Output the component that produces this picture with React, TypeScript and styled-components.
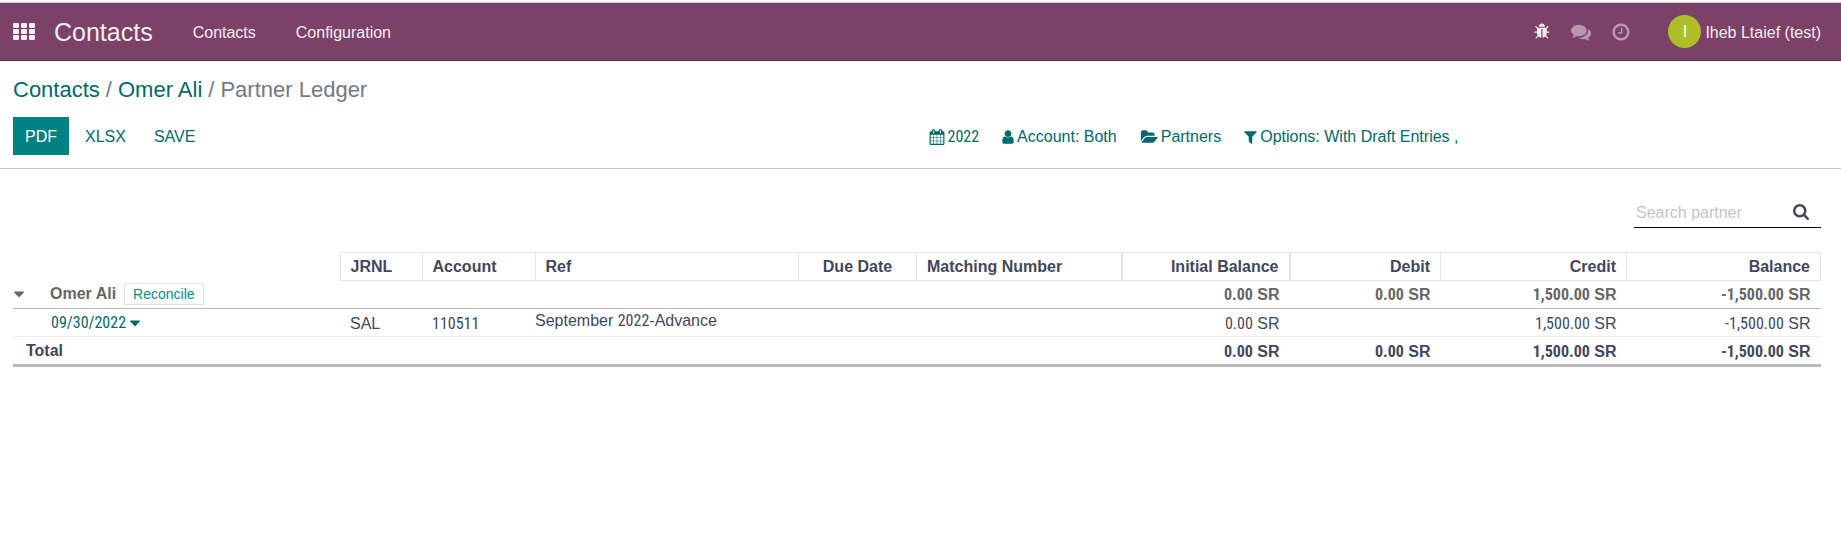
import React from "react";
import styled, { createGlobalStyle, css } from "styled-components";

const GlobalStyle = createGlobalStyle`
  *, *::before, *::after { box-sizing: border-box; }
  body {
    margin: 0;
    background: #ffffff;
    color: #43475a;
    font-family: "Liberation Sans", Arial, sans-serif;
    font-size: 16px;
    line-height: 24px;
  }
  button, input { font: inherit; }
  a { text-decoration: none; }
`;

/* ---------- icons ---------- */

const paths = {
  bug: "M1632 960q0 26-19 45t-45 19h-224q0 171-67 290l208 209q19 19 19 45t-19 45q-18 19-45 19t-45-19l-198-197q-5 5-15 13t-42 28.5-65 36.5-82 29-97 13v-896h-128v896q-51 0-101.5-13.5t-87-33-66-39-43.5-32.5l-15-14-183 207q-20 21-48 21-24 0-43-16-19-18-20.5-44.5t15.5-46.5l202-227q-58-114-58-274h-224q-26 0-45-19t-19-45 19-45 45-19h224v-294l-173-173q-19-19-19-45t19-45 45-19 45 19l173 173h844l173-173q19-19 45-19t45 19 19 45-19 45l-173 173v294h224q26 0 45 19t19 45zm-480-576h-640q0-133 93.5-226.5t226.5-93.5 226.5 93.5 93.5 226.5z",
  comments: "M1408 768q0 139-94 257t-256.5 186.5-353.5 68.5q-86 0-176-16-124 88-278 128-36 9-86 16h-3q-11 0-20.5-8t-11.5-21q-1-3-1-6.5t.5-6.5 2-6l2.5-5 3.5-5.5 4-5 4.5-5 4-4.5q5-6 23-25t26-29.5 22.5-29 25-38.5 20.5-44q-124-72-195-177t-71-224q0-139 94-257t256.5-186.5 353.5-68.5 353.5 68.5 256.5 186.5 94 257zm384 256q0 120-71 224.5t-195 176.5q10 24 20.5 44t25 38.5 22.5 29 26 29.5 23 25q1 1 4 4.5t4.5 5 4 5 3.5 5.5l2.5 5 2 6 .5 6.5-1 6.5q-3 14-13 22t-22 7q-50-7-86-16-154-40-278-128-90 16-176 16-271 0-472-132 58 4 88 4 161 0 309-45t264-129q125-92 192-212t67-254q0-77-23-152 129 71 204 178t75 230z",
  clock: "M1024 544v448q0 14-9 23t-23 9h-320q-14 0-23-9t-9-23v-64q0-14 9-23t23-9h224v-352q0-14 9-23t23-9h64q14 0 23 9t9 23zm416 352q0-148-73-273t-198-198-273-73-273 73-198 198-73 273 73 273 198 198 273 73 273-73 198-198 73-273zm224 0q0 209-103 385.5t-279.5 279.5-385.5 103-385.5-103-279.5-279.5-103-385.5 103-385.5 279.5-279.5 385.5-103 385.5 103 279.5 279.5 103 385.5z",
  calendar: "M192 1664h288v-288h-288v288zm352 0h320v-288h-320v288zm-352-352h288v-320h-288v320zm352 0h320v-320h-320v320zm-352-384h288v-288h-288v288zm736 736h320v-288h-320v288zm-384-736h320v-288h-320v288zm768 736h288v-288h-288v288zm-384-352h320v-320h-320v320zm-352-864v-288q0-13-9.5-22.5t-22.5-9.5h-64q-13 0-22.5 9.5t-9.5 22.5v288q0 13 9.5 22.5t22.5 9.5h64q13 0 22.5-9.5t9.5-22.5zm736 864h288v-320h-288v320zm-384-384h320v-288h-320v288zm384 0h288v-288h-288v288zm32-480v-288q0-13-9.5-22.5t-22.5-9.5h-64q-13 0-22.5 9.5t-9.5 22.5v288q0 13 9.5 22.5t22.5 9.5h64q13 0 22.5-9.5t9.5-22.5zm384-64v1280q0 52-38 90t-90 38h-1408q-52 0-90-38t-38-90v-1280q0-52 38-90t90-38h128v-96q0-66 47-113t113-47h64q66 0 113 47t47 113v96h384v-96q0-66 47-113t113-47h64q66 0 113 47t47 113v96h128q52 0 90 38t38 90z",
  user: "M1536 1399q0 109-62.5 187t-150.5 78h-854q-88 0-150.5-78t-62.5-187q0-85 8.5-160.5t31.5-152 58.5-131 94-89 134.5-34.5q131 128 313 128t313-128q76 0 134.5 34.5t94 89 58.5 131 31.5 152 8.5 160.5zm-256-887q0 159-112.5 271.5t-271.5 112.5-271.5-112.5-112.5-271.5 112.5-271.5 271.5-112.5 271.5 112.5 112.5 271.5z",
  folder: "M1943 952q0 31-31 66l-336 396q-43 51-120.5 86.5t-143.5 35.5h-1088q-34 0-60.5-13t-26.5-43q0-31 31-66l336-396q43-51 120.5-86.5t143.5-35.5h1088q34 0 60.5 13t26.5 43zm-343-344v160h-832q-94 0-197 47.5t-164 119.5l-337 396-5 6q0-4-.5-12.5t-.5-12.5v-960q0-92 66-158t158-66h320q92 0 158 66t66 158v32h544q92 0 158 66t66 158z",
  filter: "M1595 295q17 41-14 70l-493 493v742q0 42-39 59-13 5-25 5-27 0-45-19l-256-256q-19-19-19-45v-486l-493-493q-31-29-14-70 17-39 59-39h1280q42 0 59 39z",
  search: "M1216 832q0-185-131.5-316.5t-316.5-131.5-316.5 131.5-131.5 316.5 131.5 316.5 316.5 131.5 316.5-131.5 131.5-316.5zm512 832q0 52-38 90t-90 38q-54 0-90-38l-343-342q-179 124-399 124-143 0-273.5-55.5t-225-150-150-225-55.5-273.5 55.5-273.5 150-225 225-150 273.5-55.5 273.5 55.5 225 150 150 225 55.5 273.5q0 220-124 399l343 343q37 37 37 90z",
  caret: "M1408 704q0 26-19 45l-448 448q-19 19-45 19t-45-19l-448-448q-19-19-19-45t19-45 45-19h896q26 0 45 19t19 45z",
};

const viewBoxes: Partial<Record<keyof typeof paths, string>> = {
  caret: "384 512 1024 768",
  user: "256 0 1280 1792",
  filter: "192 0 1408 1792",
  folder: "0 0 1943 1792",
  search: "64 128 1664 1664",
};

const Svg = styled.svg`
  display: block;
  flex: none;
  fill: currentColor;
`;

interface IconProps {
  name: keyof typeof paths;
  width: number;
  height: number;
}

const Icon = ({ name, width, height }: IconProps) => (
  <Svg width={width} height={height} viewBox={viewBoxes[name] ?? "0 0 1792 1792"} aria-hidden="true">
    <path d={paths[name]} />
  </Svg>
);

const GridIcon = () => (
  <Svg width="22" height="17" viewBox="0 0 22 17" aria-hidden="true">
    {[0, 6, 12].map((y) =>
      [0, 8, 16].map((x) => <rect key={`${x}-${y}`} x={x} y={y} width="6" height="5" rx="1" />)
    )}
  </Svg>
);

/* ---------- top bar ---------- */

const Page = styled.div`
  padding-top: 2px;
`;

const Navbar = styled.header`
  display: flex;
  align-items: center;
  height: 59px;
  padding: 0 20px 0 13px;
  border-top: 1px solid #cbc9cf;
  border-bottom: 1px solid #5a2f4c;
  background: #7c4167;
  color: #f2ecf0;
`;

const plainButton = css`
  display: flex;
  align-items: center;
  padding: 0;
  border: 0;
  background: none;
  color: inherit;
  cursor: pointer;
`;

const AppsButton = styled.button`
  ${plainButton}
  margin-right: 19px;
`;

const Brand = styled.a`
  margin-right: 40px;
  color: inherit;
  font-size: 25px;
`;

const Menu = styled.nav`
  display: flex;
  gap: 40px;
  padding-top: 2px;
`;

const MenuLink = styled.a`
  color: inherit;
`;

const Systray = styled.div`
  display: flex;
  align-items: center;
  margin-left: auto;
`;

const TrayIcons = styled.div`
  display: flex;
  align-items: center;
  gap: 20px;
  margin-right: 37px;
`;

const TrayButton = styled.button<{ $dim?: boolean }>`
  ${plainButton}
  color: ${(p) => (p.$dim ? "#b896ac" : "#f2ecf0")};
`;

const UserButton = styled.button`
  ${plainButton}
  gap: 4px;
`;

const UserName = styled.span`
  padding-top: 2px;
`;

const Avatar = styled.span`
  width: 33px;
  height: 33px;
  border-radius: 50%;
  background: #b0bd26;
  color: #ffffff;
  line-height: 33px;
  text-align: center;
`;

/* ---------- control panel ---------- */

const ControlPanel = styled.section`
  padding: 16px 13px 13px;
  border-bottom: 1px solid #c8c8d0;
`;

const Breadcrumb = styled.nav`
  display: flex;
  gap: 6px;
  color: #737885;
  font-size: 22px;
  line-height: 26px;
`;

const Crumb = styled.a`
  color: #00696b;
`;

const Toolbar = styled.div`
  display: flex;
  align-items: center;
  margin-top: 14px;
`;

const Actions = styled.div`
  display: flex;
  flex: 0 0 50%;
  gap: 4px;
`;

const ActionButton = styled.button<{ $primary?: boolean }>`
  height: 38px;
  padding: 2px 12px 0;
  border: 0;
  background: ${(p) => (p.$primary ? "#008285" : "transparent")};
  color: ${(p) => (p.$primary ? "#ffffff" : "#00696b")};
  cursor: pointer;
`;

const Filters = styled.div`
  display: flex;
  gap: 23px;
  padding: 2px 0 0 8px;
`;

const FilterButton = styled.button`
  ${plainButton}
  gap: 3px;
  color: #00696b;
`;

const Figures = styled.span`
  font-family: "Roboto Condensed", Roboto, sans-serif;
`;

/* ---------- report ---------- */

const Report = styled.main`
  padding: 28px 20px 0 13px;
`;

const SearchBox = styled.label`
  display: flex;
  align-items: center;
  width: 187px;
  height: 31px;
  margin: 0 0 24px auto;
  padding: 0 12px 0 2px;
  border-bottom: 1px solid #000000;
`;

const SearchInput = styled.input`
  flex: 1;
  min-width: 0;
  padding: 2px 0 0;
  border: 0;
  outline: 0;
  background: none;
  color: inherit;
  &::placeholder { color: #c4c4c4; opacity: 1; }
`;

const Ledger = styled.table`
  width: 100%;
  table-layout: fixed;
  border-collapse: collapse;
`;

const Col = styled.col<{ $width?: number }>`
  width: ${(p) => (p.$width ? `${p.$width}px` : "auto")};
`;

const Head = styled.th<{ $align?: string; $wide?: boolean }>`
  height: 28px;
  padding: 0 10px;
  border: 1px solid #e4e4e7;
  border-right-width: ${(p) => (p.$wide ? 2 : 1)}px;
  text-align: ${(p) => p.$align ?? "left"};
  font-weight: 700;
`;

const Row = styled.tr<{ $kind: "partner" | "line" | "total" }>`
  height: ${(p) => (p.$kind === "total" ? 29 : 28)}px;
  ${(p) => p.$kind === "partner" && css`
    border-bottom: 1px solid #b5b5b7;
    color: #666666;
    font-weight: 700;
  `}
  ${(p) => p.$kind === "line" && css`
    border-bottom: 1px solid #ececec;
  `}
  ${(p) => p.$kind === "total" && css`
    border-bottom: 3px solid #b9b9b9;
    font-weight: 700;
  `}
  ${(p) => p.$kind !== "partner" && css`
    & > td { padding-top: 2px; }
  `}
`;

const Cell = styled.td<{ $right?: boolean; $flush?: boolean }>`
  padding: 0 ${(p) => (p.$flush ? 0 : 10)}px;
  text-align: ${(p) => (p.$right ? "right" : "left")};
  vertical-align: ${(p) => (p.$flush ? "top" : "middle")};
  line-height: ${(p) => (p.$flush ? 20 : 24)}px;
  white-space: nowrap;
`;

const RowTitle = styled.th<{ $indent: number }>`
  padding: 0 0 0 ${(p) => p.$indent}px;
  text-align: left;
  font-weight: inherit;
`;

const TitleLine = styled.div`
  display: flex;
  align-items: center;
`;

const FoldButton = styled.button`
  ${plainButton}
  margin-right: 26px;
`;

const ReconcileButton = styled.button`
  height: 22px;
  margin-left: 8px;
  padding: 0 8px;
  border: 1px solid #dedee3;
  background: #ffffff;
  color: #00908a;
  font-size: 14px;
  font-weight: 400;
  line-height: 18px;
  cursor: pointer;
`;

const DateButton = styled.button`
  ${plainButton}
  gap: 4px;
  color: #00696b;
`;

const Amount = ({ value }: { value: string }) => (
  <Cell $right>
    {value && (
      <>
        <Figures>{value}</Figures> SR
      </>
    )}
  </Cell>
);

const Amounts = ({ values }: { values: string[] }) => (
  <>
    {values.map((value, i) => (
      <Amount key={i} value={value} />
    ))}
  </>
);

export default function App() {
  return (
    <Page>
      <GlobalStyle />
      <Navbar>
        <AppsButton aria-label="Apps"><GridIcon /></AppsButton>
        <Brand href="#">Contacts</Brand>
        <Menu>
          <MenuLink href="#">Contacts</MenuLink>
          <MenuLink href="#">Configuration</MenuLink>
        </Menu>
        <Systray>
          <TrayIcons>
            <TrayButton aria-label="Debug"><Icon name="bug" width={17} height={17} /></TrayButton>
            <TrayButton $dim aria-label="Messages"><Icon name="comments" width={20} height={20} /></TrayButton>
            <TrayButton $dim aria-label="Activities"><Icon name="clock" width={20} height={20} /></TrayButton>
          </TrayIcons>
          <UserButton><Avatar>I</Avatar><UserName>Iheb Ltaief (test)</UserName></UserButton>
        </Systray>
      </Navbar>

      <ControlPanel>
        <Breadcrumb aria-label="Breadcrumb">
          <Crumb href="#">Contacts</Crumb>
          <span>/</span>
          <Crumb href="#">Omer Ali</Crumb>
          <span>/</span>
          <span>Partner Ledger</span>
        </Breadcrumb>
        <Toolbar>
          <Actions>
            <ActionButton $primary>PDF</ActionButton>
            <ActionButton>XLSX</ActionButton>
            <ActionButton>SAVE</ActionButton>
          </Actions>
          <Filters>
            <FilterButton><Icon name="calendar" width={16} height={16} /><Figures>2022</Figures></FilterButton>
            <FilterButton><Icon name="user" width={12} height={16} />Account: Both</FilterButton>
            <FilterButton><Icon name="folder" width={18} height={16} />Partners</FilterButton>
            <FilterButton><Icon name="filter" width={13} height={16} />Options: With Draft Entries ,</FilterButton>
          </Filters>
        </Toolbar>
      </ControlPanel>

      <Report>
        <SearchBox>
          <SearchInput type="text" placeholder="Search partner" aria-label="Search partner" />
          <Icon name="search" width={16} height={16} />
        </SearchBox>

        <Ledger>
          <colgroup>
            <Col $width={327} />
            <Col $width={82} />
            <Col $width={113} />
            <Col />
            <Col $width={118} />
            <Col $width={205} />
            <Col $width={168} />
            <Col $width={151} />
            <Col $width={186} />
            <Col $width={194} />
          </colgroup>
          <thead>
            <tr>
              <td />
              <Head>JRNL</Head>
              <Head>Account</Head>
              <Head>Ref</Head>
              <Head $align="center">Due Date</Head>
              <Head $wide>Matching Number</Head>
              <Head $align="right" $wide>Initial Balance</Head>
              <Head $align="right">Debit</Head>
              <Head $align="right">Credit</Head>
              <Head $align="right">Balance</Head>
            </tr>
          </thead>
          <tbody>
            <Row $kind="partner">
              <RowTitle scope="row" $indent={1}>
                <TitleLine>
                  <FoldButton aria-label="Fold Omer Ali"><Icon name="caret" width={10} height={8} /></FoldButton>
                  Omer Ali
                  <ReconcileButton>Reconcile</ReconcileButton>
                </TitleLine>
              </RowTitle>
              <Cell colSpan={5} />
              <Amounts values={["0.00", "0.00", "1,500.00", "-1,500.00"]} />
            </Row>
            <Row $kind="line">
              <RowTitle scope="row" $indent={38}>
                <DateButton><Figures>09/30/2022</Figures><Icon name="caret" width={10} height={8} /></DateButton>
              </RowTitle>
              <Cell>SAL</Cell>
              <Cell><Figures>110511</Figures></Cell>
              <Cell $flush>September <Figures>2022</Figures>-Advance</Cell>
              <Cell />
              <Cell />
              <Amounts values={["0.00", "", "1,500.00", "-1,500.00"]} />
            </Row>
            <Row $kind="total">
              <RowTitle scope="row" $indent={13}>Total</RowTitle>
              <Cell colSpan={5} />
              <Amounts values={["0.00", "0.00", "1,500.00", "-1,500.00"]} />
            </Row>
          </tbody>
        </Ledger>
      </Report>
    </Page>
  );
}
